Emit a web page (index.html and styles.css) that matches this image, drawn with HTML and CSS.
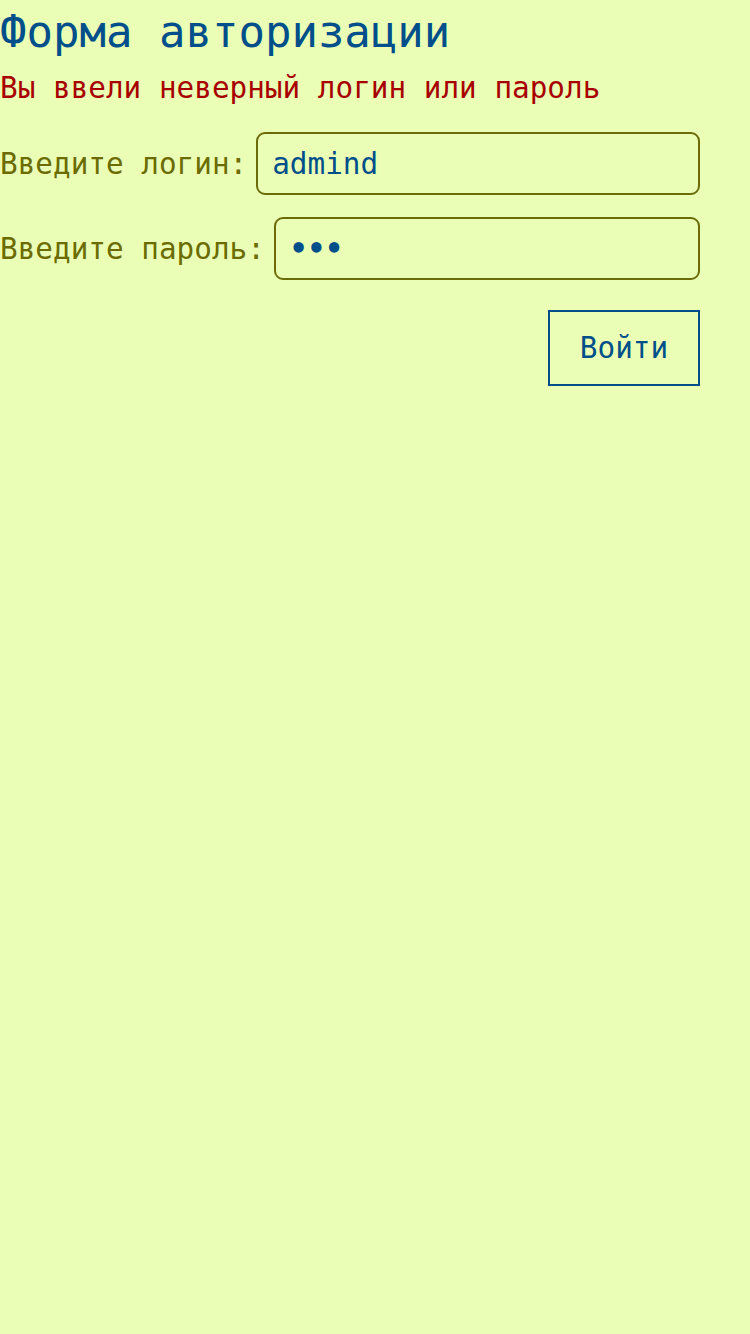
FILE: index.html
```html
<!DOCTYPE html>
<html lang="ru">
<head>
<meta charset="utf-8">
<title>Форма авторизации</title>
<link rel="stylesheet" href="styles.css">
</head>
<body>
<h1 class="title">Форма авторизации</h1>
<p class="error">Вы ввели неверный логин или пароль</p>
<form class="form">
  <div class="row">
    <label class="label" for="login">Введите логин:</label>
    <input class="field" id="login" type="text" value="admind">
  </div>
  <div class="row">
    <label class="label" for="pass">Введите пароль:</label>
    <input class="field field-pass" id="pass" type="password" value="123">
  </div>
  <div class="actions">
    <button class="btn" type="button">Войти</button>
  </div>
</form>
</body>
</html>
```

FILE: styles.css
```css
html, body {
  margin: 0;
  padding: 0;
  background: #eaffb5;
  font-family: "DejaVu Sans Mono", monospace;
}
.title {
  margin: 0;
  padding-top: 6px;
  font-size: 44px;
  font-weight: normal;
  line-height: 52px;
  color: #004f8a;
}
.error {
  margin: 13px 0 0;
  font-size: 29.333px;
  line-height: 34px;
  color: #a80000;
}
.form {
  width: 700px;
  margin-top: 27px;
  display: flex;
  flex-direction: column;
  gap: 22px;
}
.row {
  display: flex;
  align-items: center;
  gap: 9px;
}
.label {
  font-size: 29.333px;
  color: #6b6b00;
  white-space: nowrap;
}
.field {
  flex: 1;
  min-width: 0;
  height: 63px;
  box-sizing: border-box;
  border: 2px solid #6b6b0a;
  border-radius: 9px;
  background: transparent;
  padding: 0 14px;
  font-family: "DejaVu Sans Mono", monospace;
  font-size: 29.333px;
  color: #004f8a;
  outline: none;
}
.field-pass {
  font-weight: bold;
}
.actions {
  display: flex;
  justify-content: flex-end;
  margin-top: 8px;
}
.btn {
  width: 152px;
  height: 76px;
  box-sizing: border-box;
  border: 2px solid #004f8a;
  background: transparent;
  font-family: "DejaVu Sans Mono", monospace;
  font-size: 29.333px;
  color: #004f8a;
  padding: 0;
}
```
